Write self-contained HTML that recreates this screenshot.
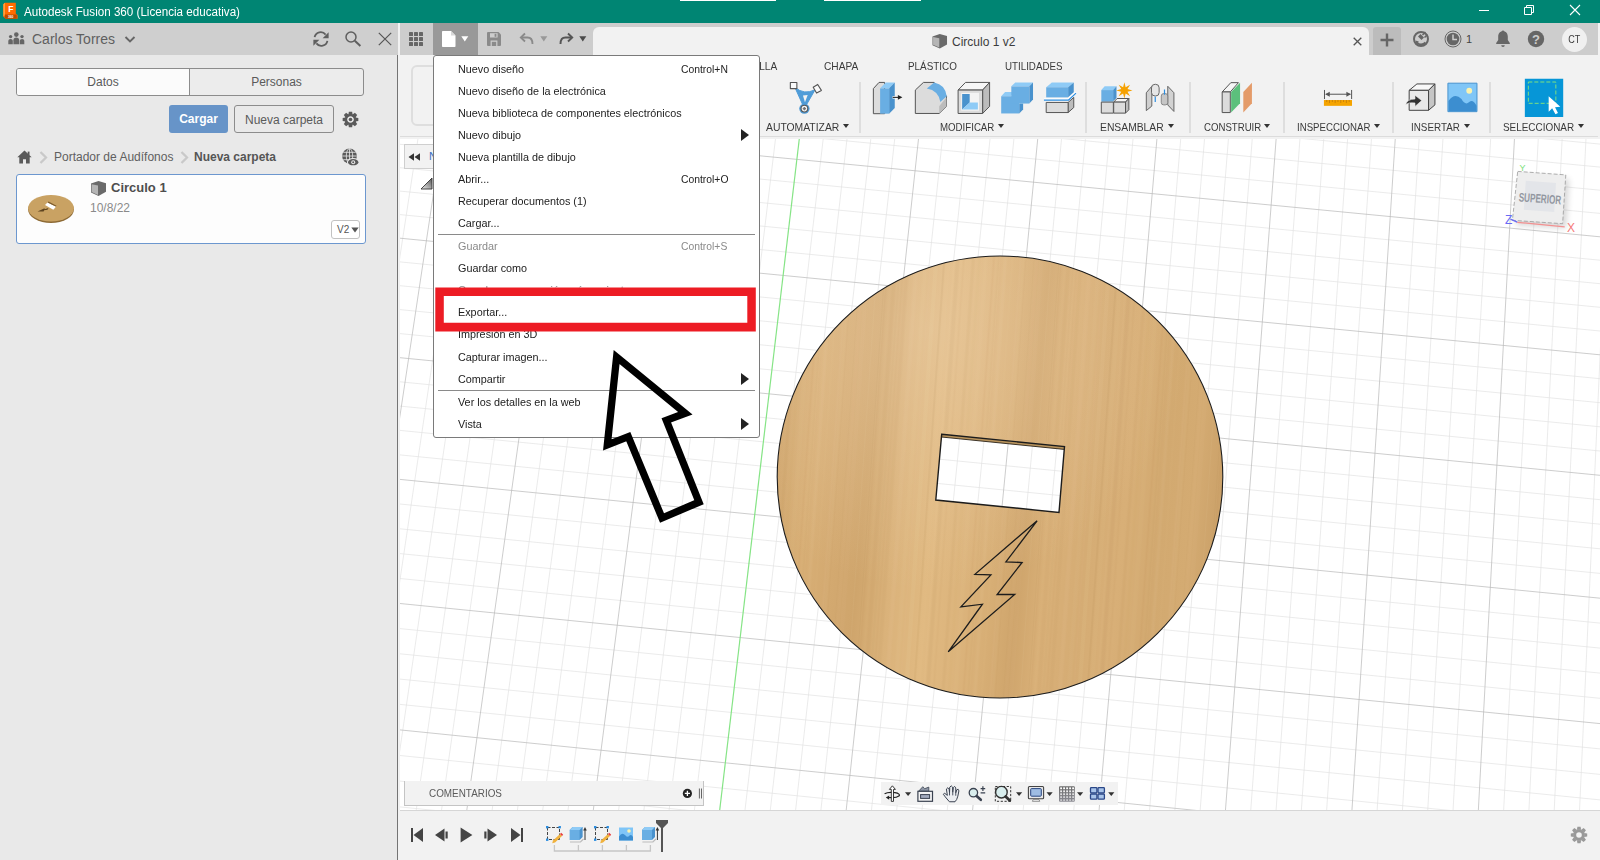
<!DOCTYPE html>
<html lang="es">
<head>
<meta charset="utf-8">
<title>Autodesk Fusion 360 (Licencia educativa)</title>
<style>
*{box-sizing:border-box;margin:0;padding:0}
html,body{width:1600px;height:860px;overflow:hidden;background:#f2f2f2;font-family:"Liberation Sans",Arial,sans-serif;font-size:12px;color:#3c3c3c}
.abs{position:absolute}
#titlebar{position:absolute;left:0;top:0;width:1600px;height:23px;background:#008573}
#titlebar .ttl{position:absolute;left:23.500px;top:4.500px;color:#fff;font-size:12.300px;line-height:15px;white-space:nowrap;transform-origin:0 50%;transform:scaleX(.946)}
#leftpanel{position:absolute;left:0;top:23px;width:398px;height:837px;background:#e9e9e9;border-right:1px solid #747474}
#lphead{position:absolute;left:0;top:0;width:398px;height:32px;background:#cfcfcf}
#lphead .name{position:absolute;left:32px;top:8px;font-size:14px;line-height:16px;color:#5f5f5f;white-space:nowrap}
.tabs{position:absolute;left:16px;top:45px;width:348px;height:28px;border:1px solid #8c8c8c;border-radius:3px;background:#ececec;overflow:hidden}
.tabs div{position:absolute;top:0;height:26px;line-height:26px;text-align:center;color:#5a5a5a;font-size:12px}
.tabs .t1{left:0;width:173px;background:#fbfbfb;border-right:1px solid #8c8c8c}
.tabs .t2{left:173px;width:173px}
.btn{position:absolute;height:28px;line-height:28px;text-align:center;border-radius:3px;font-size:12px;white-space:nowrap}

#tabstrip{position:absolute;left:400px;top:23px;width:1198px;height:32px;background:#cdcdcd}
#doctab{position:absolute;left:193px;top:4px;width:776px;height:28px;background:#f2f2f2;border-radius:6px 6px 0 0}
.tbtab{position:absolute;transform-origin:0 50%;top:59px;font-size:11px;line-height:14px;color:#3a3a3a;white-space:nowrap}
.glab{position:absolute;top:120px;font-size:11px;line-height:14px;color:#3a3a3a;white-space:nowrap}
.glab span{display:inline-block;transform-origin:0 50%}
.glab i{position:absolute;top:4px;width:0;height:0;border:3px solid transparent;border-top:4px solid #333;border-bottom:0}
.vsep{position:absolute;top:82px;width:2px;height:51px;background:#dedede}
#canvas{position:absolute;left:400px;top:139px;width:1200px;height:671px;background:#fff;overflow:hidden}

#menu{position:absolute;left:433px;top:55px;width:327px;height:383px;background:#fff;border:1px solid #7a7a7a;border-radius:3px}
#menu .mi{position:absolute;left:24px;font-size:11.5px;line-height:14px;color:#222;white-space:nowrap;transform-origin:0 50%;transform:scaleX(.94)}
#menu .sc{position:absolute;left:247px;font-size:11.5px;line-height:14px;color:#222;white-space:nowrap;transform-origin:0 50%;transform:scaleX(.9)}
#menu .dis{color:#8a8a8a}
#menu .sep{position:absolute;left:4px;width:317px;height:1px;background:#8a8a8a}
#menu .ar{position:absolute;left:307px;width:0;height:0;border:6.5px solid transparent;border-left:8.5px solid #222;border-right:0;margin-top:-1px}
</style>
</head>
<body>
<div id="titlebar">
  
  <svg class="abs" style="left:3px;top:2px" width="15" height="18" viewBox="0 0 15 18"><path d="M0.300 2.200L2 0.800H12.800V11.800L14.600 13V16.800H2.600L0.300 14.600z" fill="#ff6b00"/><path d="M0.300 2.200L2 0.800V13.500L0.300 14.600z" fill="#ffa040"/><path d="M1.800 12.500H13.800V16.800H2.600L1.800 16z" fill="#b84a00"/><text x="5.200" y="9.800" font-family="Liberation Sans, sans-serif" font-size="8.500" font-weight="bold" fill="#fff">F</text><text x="5" y="16" font-family="Liberation Sans, sans-serif" font-size="3.200" font-weight="bold" fill="#fff">360</text></svg>
  <div class="abs" style="left:680px;top:0;width:96px;height:1px;background:#fff"></div>
  <div class="abs" style="left:824px;top:0;width:97px;height:1px;background:#fff"></div>
  <svg class="abs" style="left:1470px;top:0" width="130" height="23" viewBox="1470 0 130 23"><path d="M1479 10.500h10" stroke="#fff" stroke-width="1"/><path d="M1524.500 7.500h7v7h-7zM1526.500 7.500v-2h7v7h-2" fill="none" stroke="#fff" stroke-width="1"/><path d="M1570 5l10 10M1580 5l-10 10" stroke="#fff" stroke-width="1.100"/></svg>
  <div class="ttl">Autodesk Fusion 360 (Licencia educativa)</div>
</div>
<div id="leftpanel">
  <div id="lphead"><div class="name">Carlos Torres</div>
  <svg class="abs" style="left:8px;top:9px" width="17" height="13" viewBox="0 0 17 13"><g fill="#666"><circle cx="8.3" cy="2.6" r="2.3"/><path d="M5.4 12.2V8.2c0-1.7 1.3-2.6 2.9-2.6s2.9.9 2.9 2.6v4z"/><circle cx="2.6" cy="4.6" r="1.7"/><path d="M0.3 12.2V9c0-1.4 1-2.1 2.3-2.1S4.8 7.6 4.8 9v3.2z"/><circle cx="14" cy="4.6" r="1.7"/><path d="M11.8 12.2V9c0-1.4 1-2.1 2.3-2.1s2.2.7 2.2 2.1v3.2z"/></g></svg>
  <svg class="abs" style="left:124px;top:12px" width="12" height="9" viewBox="0 0 12 9"><path d="M1.5 2l4.5 4.5L10.500 2" fill="none" stroke="#666" stroke-width="1.9"/></svg>
  <svg class="abs" style="left:312px;top:8px" width="18" height="16" viewBox="0 0 18 16"><g fill="none" stroke="#5f5f5f" stroke-width="1.8"><path d="M2.6 6.2A6.2 6.2 0 0 1 13.6 3.6"/><path d="M15.400 9.800A6.200 6.200 0 0 1 4.400 12.400"/></g><path d="M16.600 1.200v6h-6z" fill="#5f5f5f"/><path d="M1.400 14.800v-6h6z" fill="#5f5f5f"/></svg>
  <svg class="abs" style="left:343px;top:7px" width="20" height="18" viewBox="0 0 20 18"><circle cx="8" cy="7" r="5" fill="none" stroke="#5f5f5f" stroke-width="1.5"/><path d="M11.800 10.800L17.400 16" stroke="#5f5f5f" stroke-width="2"/></svg>
  <svg class="abs" style="left:378px;top:9px" width="14" height="14" viewBox="0 0 14 14"><path d="M0.800 0.800L13.200 13.200M13.200 0.800L0.800 13.200" stroke="#555" stroke-width="1.2"/></svg>
</div>
  <div class="tabs"><div class="t1">Datos</div><div class="t2">Personas</div></div>
  <div class="btn" style="left:169px;top:82px;width:59px;background:#6794c8;color:#fff;font-weight:bold">Cargar</div>
  <div class="btn" style="left:234px;top:82px;width:100px;border:1px solid #8c8c8c;color:#5a5a5a;line-height:27px;padding-top:1px">Nueva carpeta</div>
  <svg class="abs" style="left:341.500px;top:87.500px" width="17" height="17" viewBox="-8.900 -8.900 17.800 17.800"><g fill="#5a5a5a"><path id="gt" d="M-1.700 -8.200h3.400l.5 3h-4.400z"/><use href="#gt" transform="rotate(45)"/><use href="#gt" transform="rotate(90)"/><use href="#gt" transform="rotate(135)"/><use href="#gt" transform="rotate(180)"/><use href="#gt" transform="rotate(225)"/><use href="#gt" transform="rotate(270)"/><use href="#gt" transform="rotate(315)"/></g><circle r="4.800" fill="none" stroke="#5a5a5a" stroke-width="2.600"/><circle r="1.900" fill="#5a5a5a"/></svg>
  <svg class="abs" style="left:17px;top:127px" width="15" height="14" viewBox="0 0 15 14"><path d="M7.500 0.500L0.300 7.200h2.000V13.500h3.700V9.300h3V13.500h3.700V7.200h2.000z" fill="#5a5a5a"/><rect x="10.700" y="1.600" width="1.800" height="3.500" fill="#5a5a5a"/></svg>
  <svg class="abs" style="left:39px;top:128px" width="9" height="13" viewBox="0 0 9 13"><path d="M1.500 1L7 6.500L1.500 12" fill="none" stroke="#c9c9c9" stroke-width="2.300"/></svg>
  <div class="abs" style="left:54px;top:126px;line-height:16px;color:#606060;white-space:nowrap">Portador de Audífonos</div>
  <svg class="abs" style="left:180px;top:128px" width="9" height="13" viewBox="0 0 9 13"><path d="M1.500 1L7 6.500L1.500 12" fill="none" stroke="#c9c9c9" stroke-width="2.300"/></svg>
  <div class="abs" style="left:194px;top:126px;line-height:16px;color:#555;font-weight:bold;white-space:nowrap">Nueva carpeta</div>
  <svg class="abs" style="left:342px;top:125px" width="18" height="19" viewBox="0 0 18 19"><circle cx="7.500" cy="8" r="7.400" fill="#5a5a5a"/><g fill="none" stroke="#e9e9e9" stroke-width=".8"><ellipse cx="7.500" cy="8" rx="3.200" ry="7.400"/><path d="M7.500 0.600v14.800M0.100 8h14.800M1.200 4.300h12.600M1.200 11.700h12.600"/></g><ellipse cx="11.200" cy="14.200" rx="6.200" ry="4.200" fill="#e9e9e9"/><ellipse cx="11.200" cy="14.200" rx="5.200" ry="3.100" fill="#5a5a5a"/><circle cx="11.200" cy="14.200" r="2" fill="#e9e9e9"/><circle cx="11.200" cy="14.200" r="1" fill="#5a5a5a"/></svg>
  <div class="abs" style="left:16px;top:151px;width:350px;height:70px;background:#fdfdfd;border:1px solid #6c97cf;border-radius:3px">
    <svg class="abs" style="left:9px;top:17px" width="50" height="34" viewBox="0 0 50 34"><ellipse cx="25" cy="17.600" rx="22.900" ry="13.300" fill="#8d6a35"/><ellipse cx="25" cy="16.200" rx="22.900" ry="13.200" fill="#c9a263"/><ellipse cx="25" cy="16.200" rx="22.900" ry="13.200" fill="none" opacity=".5"/><path d="M21.500 10.500l8.500 4.300-2.700 2.900-8.300-4.600z" fill="#fff"/><path d="M22.500 9.600l8 4.100-.7.900-8.200-4.200z" fill="#7a5a2c"/><path d="M11.500 19.500l7-3.300 .2 1.100 3.800-1.300-1 1.800-3.300.5-.6 1.100z" fill="#5e4420"/></svg>
    <svg class="abs" style="left:73px;top:5px" width="17" height="17" viewBox="0 0 17 17"><path d="M1 3.500L8.500 1L16 3.200V11.800L8.500 16L1 12.500z" fill="#6a6a6a"/><path d="M1.600 4.200L8 5.500V15L1.600 12z" fill="#b5b5b5"/></svg>
    <div class="abs" style="left:94px;top:5px;font-size:13px;font-weight:bold;line-height:16px;color:#4e4e4e;white-space:nowrap">Circulo 1</div>
    <div class="abs" style="left:73px;top:25px;font-size:12px;line-height:16px;color:#8a8a8a;white-space:nowrap">10/8/22</div>
    <div class="abs" style="left:314px;top:45px;width:29px;height:18.500px;border:1px solid #c2c2c2;border-radius:3px;background:#fff"><span class="abs" style="left:5px;top:3px;font-size:10px;line-height:12px;color:#555">V2</span><svg class="abs" style="left:19px;top:6px" width="8" height="6" viewBox="0 0 8 6"><path d="M0.300 0.500h7.400L4 5.500z" fill="#555"/></svg></div>
  </div>
</div>

<div class="abs" style="left:399px;top:23px;width:1201px;height:837px;background:#f2f2f2"></div>
<div id="tabstrip">
  <svg class="abs" style="left:9px;top:9px" width="14" height="14" viewBox="0 0 14 14"><g fill="#666"><rect x="0" y="0" width="4" height="4" rx=".6"/><rect x="5" y="0" width="4" height="4" rx=".6"/><rect x="10" y="0" width="4" height="4" rx=".6"/><rect x="0" y="5" width="4" height="4" rx=".6"/><rect x="5" y="5" width="4" height="4" rx=".6"/><rect x="10" y="5" width="4" height="4" rx=".6"/><rect x="0" y="10" width="4" height="4" rx=".6"/><rect x="5" y="10" width="4" height="4" rx=".6"/><rect x="10" y="10" width="4" height="4" rx=".6"/></g></svg>
  <div class="abs" style="left:33px;top:0;width:45px;height:32px;background:#999"></div>
  <svg class="abs" style="left:42px;top:8px" width="14" height="16" viewBox="0 0 14 16"><path d="M0.800 0h8.200L13.500 4.500V15.200a.8.800 0 0 1-.8.800H0.800a.8.800 0 0 1-.8-.8V0.800A.8.800 0 0 1 .8 0z" fill="#fff"/><path d="M9 0v4.500h4.500z" fill="#d8d8d8"/></svg>
  <svg class="abs" style="left:61px;top:13px" width="8" height="6" viewBox="0 0 8 6"><path d="M0.300 0.300h7.000L3.800 5.500z" fill="#fff"/></svg>
  <svg class="abs" style="left:87px;top:9px" width="14" height="14" viewBox="0 0 14 14"><path d="M1 0h10.500L14 2.500V13a1 1 0 0 1-1 1H1a1 1 0 0 1-1-1V1a1 1 0 0 1 1-1z" fill="#8a8a8a"/><rect x="3" y="1.200" width="7.600" height="4.300" fill="#cdcdcd"/><rect x="7.600" y="1.800" width="1.800" height="3" fill="#8a8a8a"/><rect x="3.600" y="8.500" width="6.800" height="5.500" fill="#cdcdcd"/><rect x="4.800" y="9.800" width="4.400" height="4.200" fill="#8a8a8a"/></svg>
  <svg class="abs" style="left:119px;top:9px" width="16" height="14" viewBox="0 0 16 14"><path d="M6 1.500L1.800 5.500L6 9.500" fill="none" stroke="#8a8a8a" stroke-width="1.800"/><path d="M2 5.500h6.500c3.500 0 5 2.500 5 6.500" fill="none" stroke="#8a8a8a" stroke-width="1.800"/></svg>
  <svg class="abs" style="left:140px;top:13px" width="8" height="6" viewBox="0 0 8 6"><path d="M0.300 0.300h7.000L3.800 5.500z" fill="#999"/></svg>
  <svg class="abs" style="left:158px;top:9px" width="16" height="14" viewBox="0 0 16 14"><path d="M10 1.500L14.200 5.500L10 9.500" fill="none" stroke="#555" stroke-width="1.900"/><path d="M14 5.500H7.500c-3.500 0-5 2.500-5 6.500" fill="none" stroke="#555" stroke-width="1.900"/></svg>
  <svg class="abs" style="left:179px;top:13px" width="8" height="6" viewBox="0 0 8 6"><path d="M0.300 0.300h7.000L3.800 5.500z" fill="#4a4a4a"/></svg>
  <div id="doctab">
    <svg class="abs" style="left:337.500px;top:5.500px" width="17.500" height="16.500" viewBox="0 0 17 17"><path d="M1 3.500L8.500 1L16 3.200V11.800L8.500 16L1 12.500z" fill="#6a6a6a"/><path d="M1.600 4.200L8 5.500V15L1.600 12z" fill="#b5b5b5"/></svg>
    <div class="abs" style="left:359px;top:8px;font-size:12px;line-height:14px;color:#3c3c3c;white-space:nowrap">Circulo 1 v2</div>
    <svg class="abs" style="left:760px;top:10px" width="9" height="9" viewBox="0 0 9 9"><path d="M0.700 0.700L8.300 8.300M8.300 0.700L0.700 8.300" stroke="#555" stroke-width="1.300"/></svg>
  </div>
  <div class="abs" style="left:973px;top:4px;width:28px;height:28px;background:#bcbcbc;border-radius:3px 3px 0 0"></div>
  <svg class="abs" style="left:980px;top:10px" width="14" height="14" viewBox="0 0 14 14"><path d="M7 0.500v13M0.500 7h13" stroke="#666" stroke-width="2.400"/></svg>
  <svg class="abs" style="left:1012px;top:7px" width="18" height="18" viewBox="0 0 18 18"><circle cx="9" cy="9" r="7" fill="none" stroke="#666" stroke-width="2"/><path d="M6 6.500l3.500 3.500 2.500-2.500-3.500-3.500z" fill="#666"/><path d="M10.500 5L13.500 2M12.500 7.500L15.500 4.500" stroke="#666" stroke-width="1.500"/><path d="M5 12.500c2 2.500 6 2.500 8.500 0" fill="none" stroke="#666" stroke-width="2"/><path d="M3.500 10.500l3.300 1-2.300 2.800z" fill="#666"/></svg>
  <svg class="abs" style="left:1044px;top:7px" width="18" height="18" viewBox="0 0 18 18"><circle cx="9" cy="9" r="8" fill="none" stroke="#666" stroke-width="1"/><circle cx="9" cy="9" r="6.300" fill="#666"/><path d="M9 4.500V9.500H13" fill="none" stroke="#cdcdcd" stroke-width="1.500"/></svg>
  <div class="abs" style="left:1066px;top:9px;font-size:11px;line-height:14px;color:#444">1</div>
  <svg class="abs" style="left:1095px;top:7px" width="16" height="18" viewBox="0 0 16 18"><path d="M8 1.200c-3 0-4.800 2.200-4.800 5.300v3.500L1.200 13v1h13.600v-1L12.800 10V6.500C12.800 3.400 11 1.200 8 1.200z" fill="#666"/><circle cx="8" cy="1.600" r="1.200" fill="#666"/><path d="M6.200 15.200a1.800 1.800 0 0 0 3.600 0z" fill="#666"/></svg>
  <svg class="abs" style="left:1127px;top:7px" width="18" height="18" viewBox="0 0 18 18"><circle cx="9" cy="9" r="8.200" fill="#666"/><text x="9" y="13.500" font-family="Liberation Sans, sans-serif" font-size="13" font-weight="bold" fill="#cdcdcd" text-anchor="middle">?</text></svg>
  <div class="abs" style="left:1162px;top:4px;width:25px;height:25px;border-radius:50%;background:#f0f0f0;text-align:center;font-size:11px;line-height:25px;color:#3a3a3a"><span style="display:inline-block;transform:scaleX(.82)">CT</span></div>
</div>
<div class="abs" style="left:411px;top:65px;width:80px;height:61px;border:2px solid #dedede;border-radius:6px"></div>
<div class="tbtab" style="left:743.5px;transform:scaleX(0.92)">MALLA</div>
<div class="tbtab" style="left:824.4px;transform:scaleX(0.925)">CHAPA</div>
<div class="tbtab" style="left:907.5px;transform:scaleX(0.897)">PLÁSTICO</div>
<div class="tbtab" style="left:1005.3px;transform:scaleX(0.887)">UTILIDADES</div>
<div class="glab" style="left:766.4px"><span style="transform:scaleX(0.942)">AUTOMATIZAR</span><i style="left:76.9px"></i></div>
<div class="glab" style="left:940.3px"><span style="transform:scaleX(0.88)">MODIFICAR</span><i style="left:57.9px"></i></div>
<div class="glab" style="left:1100.3px"><span style="transform:scaleX(0.939)">ENSAMBLAR</span><i style="left:67.3px"></i></div>
<div class="glab" style="left:1203.5px"><span style="transform:scaleX(0.875)">CONSTRUIR</span><i style="left:60.8px"></i></div>
<div class="glab" style="left:1297.4px"><span style="transform:scaleX(0.876)">INSPECCIONAR</span><i style="left:77.0px"></i></div>
<div class="glab" style="left:1411.1px"><span style="transform:scaleX(0.895)">INSERTAR</span><i style="left:52.5px"></i></div>
<div class="glab" style="left:1503.1px"><span style="transform:scaleX(0.902)">SELECCIONAR</span><i style="left:74.7px"></i></div>
<!--ICONS--><svg class="abs" style="left:760px;top:76px" width="840" height="44" viewBox="760 76 840 44"><path d="M794.85 87.25 Q804.19 95.35 815.10 89.72 L806.32 105.02 L802.84 105.02 Z" fill="#4f9cd8" stroke="#4f9cd8" stroke-width="1" stroke-linejoin="round"/><polygon points="802.95,95.57 807.67,95.01 804.97,102.32" fill="#f2f2f2"/><circle cx="804.41" cy="108.62" r="5.17" fill="#4f9cd8"/><circle cx="804.41" cy="108.62" r="3.37" fill="#f4f4f4" stroke="#555" stroke-width="1.1"/><path d="M802.84 108.62h3.15M804.41 107.05v3.15" stroke="#666" stroke-width=".8"/><circle cx="804.41" cy="108.62" r="1.12" fill="none" stroke="#666" stroke-width="0.7"/><polygon points="790.35,82.52 796.87,82.52 796.87,88.60 790.35,88.60" fill="#fafafa" stroke="#555" stroke-width="1.1" stroke-linejoin="round"/><polygon points="813.19,87.25 817.69,84.44 821.40,90.40 816.56,93.10" fill="#fafafa" stroke="#555" stroke-width="1.1" stroke-linejoin="round"/><polygon points="873.37,88.60 879.00,82.41 884.62,82.41 884.62,113.69 873.37,113.69" fill="#dcdcdc" stroke="#555" stroke-width="1" stroke-linejoin="round"/><polygon points="880.12,88.37 885.75,82.41 894.75,82.41 889.12,88.37" fill="#8fcbf6"/><polygon points="889.12,88.37 894.75,82.41 894.75,108.06 889.12,113.69" fill="#4992cd"/><polygon points="880.12,88.37 889.12,88.37 889.12,113.69 880.12,113.69" fill="#69aee3"/><path d="M892.50 97.37H899.47" stroke="#fff" stroke-width="2.4"/><path d="M892.72 97.37H899.47" stroke="#222" stroke-width="1.1"/><polygon points="897.90,94.90 902.40,97.37 897.90,99.85" fill="#222"/><polygon points="915.34,90.06 923.44,82.41 934.12,82.41 946.50,96.25 946.50,106.37 939.19,113.46 915.34,113.46" fill="#dcdcdc" stroke="#555" stroke-width="1" stroke-linejoin="round"/><polygon points="939.19,106.37 946.50,97.37 946.50,106.37 939.19,113.46" fill="#bcbcbc"/><path d="M926.81 88.60 L934.12 82.41 Q945.37 84.44 946.72 96.25 L940.31 102.10 Q938.62 90.62 926.81 88.60Z" fill="#69aee3"/><polygon points="958.10,90.06 965.52,82.41 989.60,82.41 982.62,90.06" fill="#f6f6f6" stroke="#555" stroke-width="1" stroke-linejoin="round"/><polygon points="982.62,90.06 989.60,82.41 989.60,106.37 982.62,113.46" fill="#bcbcbc" stroke="#555" stroke-width="1" stroke-linejoin="round"/><polygon points="958.10,90.06 982.62,90.06 982.62,113.46 958.10,113.46" fill="#dcdcdc" stroke="#555" stroke-width="1" stroke-linejoin="round"/><polygon points="961.25,92.87 979.02,92.87 979.02,110.65 961.25,110.65" fill="#f4f4f4"/><polygon points="962.15,94.00 969.69,94.00 969.69,102.44 962.15,109.52" fill="#4992cd"/><polygon points="962.15,109.52 969.69,102.44 977.90,102.44 977.90,109.52" fill="#8fcbf6"/><polygon points="1001.19,96.25 1005.12,92.09 1013.00,92.09 1011.31,96.25" fill="#8fcbf6"/><polygon points="1019.19,103.56 1023.12,103.56 1023.12,109.52 1019.19,113.46" fill="#4992cd"/><polygon points="1001.19,96.25 1019.19,96.25 1019.19,113.46 1001.19,113.46" fill="#69aee3"/><polygon points="1011.31,86.35 1015.25,82.41 1033.02,82.41 1029.31,86.35" fill="#8fcbf6"/><polygon points="1029.31,86.35 1033.02,82.41 1033.02,99.62 1029.31,103.56" fill="#4992cd"/><polygon points="1011.31,86.35 1029.31,86.35 1029.31,103.56 1011.31,103.56" fill="#69aee3"/><polygon points="1046.19,87.25 1051.81,82.41 1073.75,82.41 1068.12,87.25" fill="#8fcbf6"/><polygon points="1068.12,87.25 1073.75,82.41 1073.75,92.31 1068.12,97.37" fill="#4992cd"/><polygon points="1046.19,87.25 1068.12,87.25 1068.12,97.37 1046.19,97.37" fill="#69aee3"/><polygon points="1068.12,102.44 1073.75,97.37 1073.75,107.50 1068.12,112.56" fill="#bcbcbc" stroke="#555" stroke-width="1" stroke-linejoin="round"/><polygon points="1046.19,102.44 1068.12,102.44 1068.12,112.56 1046.19,112.56" fill="#dcdcdc" stroke="#555" stroke-width="1" stroke-linejoin="round"/><polyline points="1043.94,99.40 1068.35,99.40 1076.00,92.42" fill="none" stroke="#fff" stroke-width="2.2" stroke-linejoin="round"/><polyline points="1043.94,100.19 1068.35,100.19 1076.00,93.10" fill="none" stroke="#2b8de0" stroke-width="1.2" stroke-linejoin="round"/><polygon points="1101.31,90.06 1104.69,86.35 1116.50,86.35 1113.12,90.06" fill="#8fcbf6"/><polygon points="1113.12,90.06 1116.50,86.35 1116.50,97.94 1113.12,101.31" fill="#4992cd"/><polygon points="1101.31,90.06 1113.12,90.06 1113.12,101.65 1101.31,101.65" fill="#69aee3"/><polygon points="1113.69,102.10 1117.06,98.50 1128.87,98.50 1125.50,102.10" fill="#f6f6f6" stroke="#555" stroke-width="1" stroke-linejoin="round"/><polygon points="1125.50,102.10 1128.87,98.50 1128.87,109.75 1125.50,113.12" fill="#bcbcbc" stroke="#555" stroke-width="1" stroke-linejoin="round"/><polygon points="1101.31,102.10 1113.35,102.10 1113.35,113.12 1101.31,113.12" fill="#dcdcdc" stroke="#555" stroke-width="1" stroke-linejoin="round"/><polygon points="1113.69,102.10 1125.50,102.10 1125.50,113.12 1113.69,113.12" fill="#dcdcdc" stroke="#555" stroke-width="1" stroke-linejoin="round"/><polygon points="1124.37,82.30 1125.66,87.28 1130.10,84.67 1127.49,89.11 1132.47,90.40 1127.49,91.69 1130.10,96.13 1125.66,93.52 1124.37,98.50 1123.08,93.52 1118.65,96.13 1121.25,91.69 1116.27,90.40 1121.25,89.11 1118.65,84.67 1123.08,87.28" fill="#f5a100"/><polygon points="1146.30,92.75 1151.82,86.25 1151.82,106.07 1146.30,110.62" fill="#cfcfcf" stroke="#666" stroke-width="1" stroke-linejoin="round"/><rect x="1151.50" y="84.30" width="7.64" height="11.70" rx="3.5" fill="#e6e6e6" stroke="#666" stroke-width="1"/><polygon points="1167.75,86.25 1173.92,92.75 1173.92,111.44 1167.75,104.94" fill="#d2d2d2" stroke="#666" stroke-width="1" stroke-linejoin="round"/><rect x="1161.25" y="93.56" width="6.50" height="11.37" rx="2.5" fill="#c6c6c6" stroke="#777" stroke-width=".8"/><polyline points="1155.24,96.81 1155.24,102.01" fill="none" stroke="#2b8de0" stroke-width="1.2" stroke-linejoin="round"/><polyline points="1164.50,89.50 1164.50,94.70" fill="none" stroke="#2b8de0" stroke-width="1.2" stroke-linejoin="round"/><polygon points="1222.18,91.94 1230.80,82.67 1238.43,82.67 1230.31,91.94" fill="#f6f6f6" stroke="#555" stroke-width="1" stroke-linejoin="round"/><polygon points="1222.18,91.94 1230.31,91.94 1230.31,112.57 1222.18,112.57" fill="#dcdcdc" stroke="#555" stroke-width="1" stroke-linejoin="round"/><polygon points="1231.12,91.94 1240.06,82.67 1240.06,103.31 1231.12,112.57" fill="#5cc07c"/><polygon points="1243.31,91.94 1251.92,82.67 1251.92,103.31 1243.31,112.57" fill="#e49b69"/><polyline points="1324.49,89.96 1324.49,99.06" fill="none" stroke="#555" stroke-width="1" stroke-linejoin="round"/><polyline points="1351.62,89.96 1351.62,99.06" fill="none" stroke="#555" stroke-width="1" stroke-linejoin="round"/><polyline points="1325.85,94.22 1350.45,94.22" fill="none" stroke="#555" stroke-width="1" stroke-linejoin="round"/><polygon points="1325.26,94.22 1329.72,91.70 1329.72,96.74" fill="#555"/><polygon points="1350.84,94.22 1346.38,91.70 1346.38,96.74" fill="#555"/><polygon points="1323.91,100.03 1352.00,100.03 1352.00,105.85 1323.91,105.85" fill="#f5a400"/><polyline points="1326.72,100.03 1326.72,101.97" fill="none" stroke="#b8730a" stroke-width="0.7" stroke-linejoin="round"/><polyline points="1329.53,100.03 1329.53,102.94" fill="none" stroke="#b8730a" stroke-width="0.7" stroke-linejoin="round"/><polyline points="1332.34,100.03 1332.34,101.97" fill="none" stroke="#b8730a" stroke-width="0.7" stroke-linejoin="round"/><polyline points="1335.15,100.03 1335.15,102.94" fill="none" stroke="#b8730a" stroke-width="0.7" stroke-linejoin="round"/><polyline points="1337.96,100.03 1337.96,101.97" fill="none" stroke="#b8730a" stroke-width="0.7" stroke-linejoin="round"/><polyline points="1340.77,100.03 1340.77,102.94" fill="none" stroke="#b8730a" stroke-width="0.7" stroke-linejoin="round"/><polyline points="1343.57,100.03 1343.57,101.97" fill="none" stroke="#b8730a" stroke-width="0.7" stroke-linejoin="round"/><polyline points="1346.38,100.03 1346.38,102.94" fill="none" stroke="#b8730a" stroke-width="0.7" stroke-linejoin="round"/><polyline points="1349.19,100.03 1349.19,101.97" fill="none" stroke="#b8730a" stroke-width="0.7" stroke-linejoin="round"/><polygon points="1409.16,90.34 1416.91,83.95 1434.93,83.95 1428.54,90.34" fill="#f8f8f8" stroke="#444" stroke-width="1" stroke-linejoin="round"/><polygon points="1428.54,90.34 1434.93,83.95 1434.93,104.88 1428.54,110.30" fill="#c6c6c6" stroke="#444" stroke-width="1" stroke-linejoin="round"/><polygon points="1409.16,90.34 1428.54,90.34 1428.54,110.30 1409.16,110.30" fill="#e9e9e9" stroke="#444" stroke-width="1" stroke-linejoin="round"/><path d="M1405.68 104.49 Q1407.23 99.06 1414.98 99.06 V95.19 L1421.76 100.61 L1414.98 106.43 V102.94 Q1409.16 101.97 1405.68 104.49Z" fill="#333" stroke="#f2f2f2" stroke-width=".6"/><polygon points="1447.92,83.18 1476.98,83.18 1476.98,111.66 1447.92,111.66" fill="#80c6f7" stroke="#4a93cf" stroke-width="1" stroke-linejoin="round"/><path d="M1448.50 111.27 V101.00 Q1454.70 92.28 1461.48 99.06 Q1465.35 105.85 1469.23 101.97 Q1473.10 99.06 1476.59 105.85 V111.27Z" fill="#3c8ed0"/><circle cx="1469.23" cy="90.73" r="2.91" fill="#fbf3b0"/><polygon points="1524.84,78.72 1563.20,78.72 1563.20,116.89 1524.84,116.89" fill="#0696d7"/><rect x="1528.33" y="82.01" width="27.51" height="21.31" fill="none" stroke="#7fe07f" stroke-width="1" stroke-dasharray="4 2"/><polygon points="1548.67,96.16 1548.67,111.66 1552.16,108.36 1555.45,114.18 1557.97,113.01 1555.06,107.20 1560.30,106.81" fill="#fff"/></svg><!--/ICONS-->
<div class="vsep" style="left:859px"></div>
<div class="vsep" style="left:1085px"></div>
<div class="vsep" style="left:1189px"></div>
<div class="vsep" style="left:1283px"></div>
<div class="vsep" style="left:1392px"></div>
<div class="vsep" style="left:1489px"></div>
<div class="abs" style="left:400px;top:136px;width:1198px;height:1px;background:#dcdcdc"></div>
<div id="canvas"><!--CANVAS--><svg class="abs" style="left:0;top:-1px" width="1200" height="673" viewBox="400 138 1200 673">
<defs><linearGradient id="wood" gradientUnits="userSpaceOnUse" x1="777" y1="477" x2="1223" y2="520">
<stop offset="0" stop-color="#d0a66d"/><stop offset=".07" stop-color="#d8af76"/><stop offset=".14" stop-color="#d3a970"/><stop offset=".2" stop-color="#cfa56c"/><stop offset=".27" stop-color="#dab27a"/><stop offset=".36" stop-color="#e0b981"/><stop offset=".43" stop-color="#dcb47c"/><stop offset=".5" stop-color="#d7ae75"/><stop offset=".56" stop-color="#cfa56c"/><stop offset=".62" stop-color="#d9b078"/><stop offset=".7" stop-color="#d5ac74"/><stop offset=".78" stop-color="#d8af77"/><stop offset=".86" stop-color="#d2a970"/><stop offset=".93" stop-color="#d4ab72"/><stop offset="1" stop-color="#caa068"/></linearGradient>
<radialGradient id="hl" gradientUnits="userSpaceOnUse" cx="930" cy="330" r="260"><stop offset="0" stop-color="#f0d6b4" stop-opacity=".42"/><stop offset="1" stop-color="#f0d6b4" stop-opacity="0"/></radialGradient>
<pattern id="grain" patternUnits="userSpaceOnUse" width="173" height="10" patternTransform="rotate(4)"><rect x="0.0" y="0" width="2" height="10" fill="#fff0d0" opacity="0.029"/><rect x="3.0" y="0" width="1" height="10" fill="#7a4e18" opacity="0.018"/><rect x="11.0" y="0" width="1" height="10" fill="#7a4e18" opacity="0.022"/><rect x="13.0" y="0" width="3" height="10" fill="#fff0d0" opacity="0.018"/><rect x="17.0" y="0" width="4" height="10" fill="#fff0d0" opacity="0.017"/><rect x="28.0" y="0" width="1" height="10" fill="#fff0d0" opacity="0.037"/><rect x="36.0" y="0" width="1" height="10" fill="#7a4e18" opacity="0.035"/><rect x="38.0" y="0" width="1.5" height="10" fill="#8a5a1c" opacity="0.035"/><rect x="41.5" y="0" width="2" height="10" fill="#fff0d0" opacity="0.020"/><rect x="44.5" y="0" width="4" height="10" fill="#8a5a1c" opacity="0.035"/><rect x="50.5" y="0" width="1" height="10" fill="#7a4e18" opacity="0.035"/><rect x="53.5" y="0" width="2" height="10" fill="#8a5a1c" opacity="0.034"/><rect x="56.5" y="0" width="4" height="10" fill="#8a5a1c" opacity="0.036"/><rect x="65.5" y="0" width="4" height="10" fill="#fff0d0" opacity="0.042"/><rect x="74.5" y="0" width="4" height="10" fill="#fff0d0" opacity="0.028"/><rect x="80.5" y="0" width="1.5" height="10" fill="#fff0d0" opacity="0.018"/><rect x="85.0" y="0" width="4" height="10" fill="#fff0d0" opacity="0.045"/><rect x="94.0" y="0" width="2" height="10" fill="#7a4e18" opacity="0.050"/><rect x="97.0" y="0" width="4" height="10" fill="#fff0d0" opacity="0.021"/><rect x="104.0" y="0" width="1.5" height="10" fill="#fff0d0" opacity="0.030"/><rect x="106.5" y="0" width="4" height="10" fill="#7a4e18" opacity="0.043"/><rect x="113.5" y="0" width="2" height="10" fill="#8a5a1c" opacity="0.036"/><rect x="122.5" y="0" width="3" height="10" fill="#8a5a1c" opacity="0.044"/><rect x="128.5" y="0" width="3" height="10" fill="#8a5a1c" opacity="0.017"/><rect x="134.5" y="0" width="4" height="10" fill="#fff0d0" opacity="0.025"/><rect x="143.5" y="0" width="2" height="10" fill="#8a5a1c" opacity="0.048"/><rect x="148.5" y="0" width="1.5" height="10" fill="#7a4e18" opacity="0.019"/><rect x="151.0" y="0" width="1.5" height="10" fill="#8a5a1c" opacity="0.019"/><rect x="154.5" y="0" width="3" height="10" fill="#fff0d0" opacity="0.047"/><rect x="162.5" y="0" width="1" height="10" fill="#fff0d0" opacity="0.030"/><rect x="170.5" y="0" width="2" height="10" fill="#fff0d0" opacity="0.043"/></pattern><clipPath id="hole"><polygon points="941.7,434.2 1064.5,446.6 1059,512.4 935.8,500"/></clipPath></defs>
<path d="M418.1 138.0L315.0 811.0M465.7 138.0L365.6 811.0M489.6 138.0L390.9 811.0M513.4 138.0L416.1 811.0M537.2 138.0L441.4 811.0M584.9 138.0L492.0 811.0M608.8 138.0L517.3 811.0M632.6 138.0L542.6 811.0M656.4 138.0L567.9 811.0M704.1 138.0L618.5 811.0M727.9 138.0L643.8 811.0M751.8 138.0L669.0 811.0M775.6 138.0L694.3 811.0M823.3 138.0L744.9 811.0M847.1 138.0L770.2 811.0M870.9 138.0L795.5 811.0M894.8 138.0L820.8 811.0M942.5 138.0L871.4 811.0M966.3 138.0L896.6 811.0M990.1 138.0L921.9 811.0M1014.0 138.0L947.2 811.0M1061.6 138.0L997.8 811.0M1085.5 138.0L1023.1 811.0M1109.3 138.0L1048.4 811.0M1133.1 138.0L1073.7 811.0M1180.8 138.0L1124.2 811.0M1204.6 138.0L1149.5 811.0M1228.5 138.0L1174.8 811.0M1252.3 138.0L1200.1 811.0M1300.0 138.0L1250.7 811.0M1323.8 138.0L1276.0 811.0M1347.7 138.0L1301.3 811.0M1371.5 138.0L1326.6 811.0M1419.2 138.0L1377.1 811.0M1443.0 138.0L1402.4 811.0M1466.8 138.0L1427.7 811.0M1490.7 138.0L1453.0 811.0M1538.3 138.0L1503.6 811.0M1562.2 138.0L1528.9 811.0M1586.0 138.0L1554.2 811.0M1609.9 138.0L1579.5 811.0M400.0 29.0L1600.0 144.1M400.0 51.9L1600.0 167.1M400.0 74.9L1600.0 190.2M400.0 97.9L1600.0 213.4M400.0 144.3L1600.0 260.2M400.0 167.7L1600.0 283.7M400.0 191.1L1600.0 307.3M400.0 214.6L1600.0 331.0M400.0 261.9L1600.0 378.7M400.0 285.7L1600.0 402.7M400.0 309.6L1600.0 426.8M400.0 333.6L1600.0 451.0M400.0 381.8L1600.0 499.7M400.0 406.1L1600.0 524.2M400.0 430.4L1600.0 548.8M400.0 454.9L1600.0 573.4M400.0 504.0L1600.0 623.1M400.0 528.8L1600.0 648.1M400.0 553.6L1600.0 673.1M400.0 578.5L1600.0 698.3M400.0 628.6L1600.0 748.9M400.0 653.8L1600.0 774.4M400.0 679.1L1600.0 799.9M400.0 704.4L1600.0 825.6M400.0 755.5L1600.0 877.2M400.0 781.1L1600.0 903.1M400.0 806.9L1600.0 929.2" stroke="#e2e2e2" stroke-width=".7" fill="none"/>
<path d="M441.9 138.0L340.3 811.0M561.1 138.0L466.7 811.0M680.3 138.0L593.2 811.0M918.6 138.0L846.1 811.0M1037.8 138.0L972.5 811.0M1157.0 138.0L1099.0 811.0M1276.2 138.0L1225.4 811.0M1395.3 138.0L1351.9 811.0M1514.5 138.0L1478.3 811.0M1633.7 138.0L1604.7 811.0M400.0 121.1L1600.0 236.8M400.0 238.2L1600.0 354.8M400.0 357.7L1600.0 475.3M400.0 479.4L1600.0 598.2M400.0 603.5L1600.0 723.6M400.0 729.9L1600.0 851.3" stroke="#bcbcbc" stroke-width=".75" fill="none"/>
<path d="M799.4 138L719.6 811" stroke="#86e486" stroke-width="1.2" fill="none"/>
<path d="M777.2 477A222.8 221 0 1 0 1222.800 477A222.8 221 0 1 0 777.2 477ZM941.7 434.2L1064.5 446.6L1059 512.4L935.8 500Z" fill="url(#wood)" fill-rule="evenodd"/>
<path d="M777.2 477A222.8 221 0 1 0 1222.800 477A222.8 221 0 1 0 777.2 477ZM941.7 434.2L1064.5 446.6L1059 512.4L935.8 500Z" fill="url(#hl)" fill-rule="evenodd"/>
<path d="M777.2 477A222.8 221 0 1 0 1222.800 477A222.8 221 0 1 0 777.2 477ZM941.7 434.2L1064.5 446.6L1059 512.4L935.8 500Z" fill="url(#grain)" fill-rule="evenodd"/>
<path d="M777.2 477A222.8 221 0 1 0 1222.800 477A222.8 221 0 1 0 777.2 477Z" fill="none" stroke="#1c1c1c" stroke-width="1.1"/>
<polygon points="941.7,434.2 1064.5,446.6 1064.2,449.4 941.4,437" fill="#b8935c"/>
<path d="M941.7 434.2L1064.5 446.6L1059 512.4L935.8 500Z" fill="none" stroke="#1c1c1c" stroke-width="1.4"/>
<path d="M941.4 437L1064.2 449.4" stroke="#2a2218" stroke-width=".9" fill="none"/>
<polygon points="1037.1,520.8 1005.9,561.9 1022.1,562.5 997.1,594.5 1014.7,594.5 948.2,651.8 982.4,604.2 960.9,606.8 990.9,574.9 974.9,574.3" fill="none" stroke="#1c1c1c" stroke-width="1.3" stroke-linejoin="miter"/>
</svg><!--/CANVAS--></div>


<!--CANVASUI-->
<div class="abs" style="left:404px;top:144px;width:120px;height:25px;background:#f2f2f2;border:1px solid #cfcfcf"></div>
<svg class="abs" style="left:408px;top:152px" width="13" height="10" viewBox="0 0 13 10"><path d="M6 1.200v7.600L0.500 5zM12 1.200v7.600L6.500 5z" fill="#333"/></svg>
<div class="abs" style="left:429px;top:149px;font-size:11px;line-height:14px;color:#3a6fc0;white-space:nowrap">NAVEGADOR</div>
<svg class="abs" style="left:420px;top:177px" width="13" height="13" viewBox="0 0 13 13"><defs><linearGradient id="tg" x1="0" y1="1" x2="1" y2="0"><stop offset="0" stop-color="#eee"/><stop offset="1" stop-color="#555"/></linearGradient></defs><path d="M12 1V12H1z" fill="url(#tg)" stroke="#333" stroke-width=".9"/></svg>
<div class="abs" style="left:404px;top:781px;width:300px;height:25px;background:#f2f2f2;border:1px solid #c4c4c4;border-top:0"></div>
<div class="abs" style="left:429.400px;top:786px;font-size:11px;line-height:14px;color:#5a5a5a;white-space:nowrap;transform-origin:0 50%;transform:scaleX(.9)" id="coment">COMENTARIOS</div>
<svg class="abs" style="left:682px;top:788px" width="22" height="12" viewBox="0 0 22 12"><circle cx="5.400" cy="5.400" r="4.600" fill="#222"/><path d="M2.800 5.400h5.200M5.400 2.800v5.200" stroke="#fff" stroke-width="1.300"/><path d="M17.400 0.500v10M19.500 0.500v10" stroke="#555" stroke-width=".9"/></svg>
<!--/CANVASUI-->


<!--CUBE-->
<svg class="abs" style="left:1495px;top:155px" width="95" height="85" viewBox="1495 155 95 85">
<defs><filter id="cs" x="-30%" y="-30%" width="170%" height="170%"><feGaussianBlur stdDeviation="3"/></filter></defs>
<polygon points="1521,176 1569,179 1566,228 1516,225" fill="#000" opacity=".16" filter="url(#cs)"/>
<polygon points="1517.700,171.400 1565.800,174.900 1562.600,223.700 1512.400,220.300" fill="#eeeeee" stroke="#8f8f8f" stroke-width=".7" stroke-dasharray="4 2"/>
<polygon points="1525.800,180.800 1556,183 1554.200,212 1523.800,209.800" fill="#e3e5e9"/>
<path d="M1517.200 222.300L1564.700 226.800" stroke="#f39090" stroke-width="1.200"/>
<path d="M1510.500 219.200L1517.200 222.200" stroke="#6a6af5" stroke-width="1.400"/>
<text transform="translate(1518.400,201.400) rotate(4) scale(.655,1)" font-family="Liberation Sans, sans-serif" font-size="12.500" font-weight="bold" fill="#9297a0">SUPERIOR</text>
<text x="1519.500" y="171" font-family="Liberation Sans, sans-serif" font-size="9" fill="#7be07b">Y</text>
<text x="1505" y="223.500" font-family="Liberation Sans, sans-serif" font-size="12" fill="#6a6af5">Z</text>
<text x="1567" y="231.500" font-family="Liberation Sans, sans-serif" font-size="12" fill="#f57a7a">X</text>
</svg>
<!--/CUBE-->
<!--NAVBAR-->
<div class="abs" style="left:881px;top:782px;width:237px;height:23px;background:#f2f2f2"></div>
<svg class="abs" style="left:881px;top:782px" width="237" height="23" viewBox="881 782 237 23">
<path d="M884.600 793.800A7.900 2.600 0 1 1 889 797.500" fill="none" stroke="#222" stroke-width="1.200"/>
<path d="M885.800 797.600l3.400-2.100v4.200z" fill="#222"/>
<path d="M891.300 801.400v-12h-1.900l3-3.600 3 3.600h-1.900v12z" fill="#fff" stroke="#222" stroke-width=".9"/>
<path d="M905 792.300h6.200l-3.100 3.600z" fill="#333"/>
<path d="M918.500 791.300l4.300-4.600 1.900 2 4.100-1.600v4.200z" fill="#8d95a5" stroke="#3a4250" stroke-width=".8"/>
<rect x="917.900" y="791.300" width="14.600" height="10" fill="#f4f4f4" stroke="#3a4250" stroke-width="1.200"/>
<rect x="920.600" y="794.600" width="9" height="3.800" fill="#a2aabd" stroke="#3a4250" stroke-width="1"/>
<path d="M949.38 801.75 L945.25 796.88 L943.38 794.25 L944.50 793.13 L947.35 795.38 L946.38 789.00 L947.88 787.73 L949.15 789.00 L949.53 792.75 L949.75 787.13 L951.25 785.85 L952.60 787.13 L952.75 792.38 L953.35 787.50 L954.63 786.45 L955.75 787.88 L955.75 792.90 L956.80 789.75 L958.15 789.23 L958.90 790.88 L957.85 796.13 L956.65 799.50 L955.00 801.75Z" fill="#eceef2" stroke="#3a4250" stroke-width="1" stroke-linejoin="round"/><path d="M949.53 792.75V795.38M952.75 792.38V795.38M955.75 792.90V795.75" stroke="#3a4250" stroke-width=".9" fill="none"/>

<circle cx="973.400" cy="792.700" r="4.200" fill="#d9eeee" stroke="#3a4250" stroke-width="1.300"/>
<path d="M976.600 796l4.200 3.800" stroke="#3a4250" stroke-width="2.600" stroke-linecap="round"/>
<path d="M980.600 788.600h4.600M982.900 786.300v4.600M980.600 792.900h4.600" stroke="#3a4250" stroke-width="1.200"/>
<rect x="995.300" y="786.500" width="15.400" height="14.800" fill="none" stroke="#333" stroke-width="1" stroke-dasharray="2.200 1.600"/>
<circle cx="1001.400" cy="792.200" r="5.800" fill="#d9eeee" stroke="#333" stroke-width="1.400"/>
<path d="M1005.600 796.600l4.200 4" stroke="#333" stroke-width="2.800" stroke-linecap="round"/>
<path d="M1016 792.300h6.200l-3.100 3.600z" fill="#333"/>
<rect x="1028.400" y="786.500" width="15.200" height="12.200" rx="1" fill="#e9e9e9" stroke="#444" stroke-width="1.100"/>
<rect x="1030.700" y="788.600" width="10.600" height="7.600" rx=".8" fill="#9fbde3" stroke="#2a4780" stroke-width="1"/>
<path d="M1033.200 799.600h5.800l.8 1.700h-7.400z" fill="#fff" stroke="#666" stroke-width=".7"/>
<path d="M1046.5 792.300h6.200l-3.100 3.600z" fill="#333"/>
<defs><linearGradient id="gg" x1="0" y1="0" x2="0" y2="1"><stop offset="0" stop-color="#6b6b6b"/><stop offset="1" stop-color="#8c8c94"/></linearGradient></defs>
<rect x="1059" y="786.300" width="15.800" height="15.500" rx="1" fill="url(#gg)"/>
<g fill="#fff"><rect x="1060.2" y="787.4" width="1.800" height="1.800" opacity="1.00"/><rect x="1063.2" y="787.4" width="1.800" height="1.800" opacity="1.00"/><rect x="1066.2" y="787.4" width="1.800" height="1.800" opacity="1.00"/><rect x="1069.2" y="787.4" width="1.800" height="1.800" opacity="1.00"/><rect x="1072.2" y="787.4" width="1.800" height="1.800" opacity="1.00"/><rect x="1060.2" y="790.4" width="1.800" height="1.800" opacity="0.88"/><rect x="1063.2" y="790.4" width="1.800" height="1.800" opacity="0.88"/><rect x="1066.2" y="790.4" width="1.800" height="1.800" opacity="0.88"/><rect x="1069.2" y="790.4" width="1.800" height="1.800" opacity="0.88"/><rect x="1072.2" y="790.4" width="1.800" height="1.800" opacity="0.88"/><rect x="1060.2" y="793.3" width="1.800" height="1.800" opacity="0.76"/><rect x="1063.2" y="793.3" width="1.800" height="1.800" opacity="0.76"/><rect x="1066.2" y="793.3" width="1.800" height="1.800" opacity="0.76"/><rect x="1069.2" y="793.3" width="1.800" height="1.800" opacity="0.76"/><rect x="1072.2" y="793.3" width="1.800" height="1.800" opacity="0.76"/><rect x="1060.2" y="796.2" width="1.800" height="1.800" opacity="0.64"/><rect x="1063.2" y="796.2" width="1.800" height="1.800" opacity="0.64"/><rect x="1066.2" y="796.2" width="1.800" height="1.800" opacity="0.64"/><rect x="1069.2" y="796.2" width="1.800" height="1.800" opacity="0.64"/><rect x="1072.2" y="796.2" width="1.800" height="1.800" opacity="0.64"/><rect x="1060.2" y="799.2" width="1.800" height="1.800" opacity="0.52"/><rect x="1063.2" y="799.2" width="1.800" height="1.800" opacity="0.52"/><rect x="1066.2" y="799.2" width="1.800" height="1.800" opacity="0.52"/><rect x="1069.2" y="799.2" width="1.800" height="1.800" opacity="0.52"/><rect x="1072.2" y="799.2" width="1.800" height="1.800" opacity="0.52"/></g>
<path d="M1077 792.300h6.200l-3.100 3.600z" fill="#333"/>
<g fill="#a9c4ea" stroke="#2a4788" stroke-width="1.300"><rect x="1090.500" y="787.700" width="6.400" height="5.200" rx=".8"/><rect x="1098" y="787.700" width="6.400" height="5.200" rx=".8"/><rect x="1090.500" y="794" width="6.400" height="5.200" rx=".8"/><rect x="1098" y="794" width="6.400" height="5.200" rx=".8"/></g>
<path d="M1108.2 792.300h6.200l-3.100 3.600z" fill="#333"/>
</svg>
<!--/NAVBAR-->
<div class="abs" style="left:400px;top:810px;width:1200px;height:1px;background:#d6d6d6"></div>
<!--TIMELINE-->
<svg class="abs" style="left:400px;top:812px" width="300" height="48" viewBox="400 812 300 48">
<g fill="#444"><rect x="411" y="828" width="2" height="14"/><path d="M423 828v14l-9.500-7z"/>
<path d="M444.500 828.500v13l-9.500-6.500z"/><rect x="445.500" y="831.500" width="2.200" height="7"/>
<path d="M460.600 827.400v15.200l11.800-7.600z"/>
<path d="M487.500 828.500v13l9.500-6.500z"/><rect x="484.300" y="831.500" width="2.200" height="7"/>
<path d="M511 828v14l9.500-7z"/><rect x="521" y="828" width="2" height="14"/></g>
<path d="M554.400 845v6h96v-6M578.400 845v6M602.400 845v6M626.400 845v6" fill="none" stroke="#c6c6c6" stroke-width="1.300"/>
<g id="tsk"><rect x="547.500" y="827.500" width="12" height="12" fill="none" stroke="#444" stroke-width="1" stroke-dasharray="3 1.500"/><g fill="#2b8de0"><rect x="546" y="826" width="2.400" height="2.400"/><rect x="558.500" y="826" width="2.400" height="2.400"/><rect x="546" y="838.500" width="2.400" height="2.400"/></g><path d="M553 840.500l7-6.500 2 2-7 6.500-2.800.8z" fill="#f0b13c"/><path d="M560 834l1.200-1.200 2 2L562 836z" fill="#e83d3d"/></g>
<use href="#tsk" x="48" y="0"/>
<g id="tex"><path d="M569.600 830l3-3h10v10l-3 3z" fill="#4a92cd"/><path d="M569.600 830l3-3h10l-3 3z" fill="#8fcbf6"/><rect x="569.600" y="830" width="10" height="10" fill="#69aee3"/><path d="M570 842h10.500l3-3" fill="none" stroke="#bbb" stroke-width="1.200"/><path d="M585 840v-11" stroke="#333" stroke-width="1"/><path d="M583.200 830.500l1.800-3.500 1.800 3.500z" fill="#333"/></g>
<use href="#tex" x="72.400" y="0"/>
<rect x="619" y="827.500" width="14" height="13" fill="#7fc5f7"/><path d="M619 840.500v-4q3-5 6.500-1q2 2.500 4 0q2-1.500 3.500 1.500v3.500z" fill="#3c8ed0"/><circle cx="629" cy="831" r="1.800" fill="#fbf3b0"/>
<path d="M656 820h12v3l-5 5v24h-2v-24l-5-5z" fill="#555"/>
</svg>
<svg class="abs" style="left:1570px;top:826px" width="18" height="18" viewBox="-9 -9 18 18"><g fill="#999"><path id="g2" d="M-1.600 -8.200h3.200l.5 3h-4.200z"/><use href="#g2" transform="rotate(45)"/><use href="#g2" transform="rotate(90)"/><use href="#g2" transform="rotate(135)"/><use href="#g2" transform="rotate(180)"/><use href="#g2" transform="rotate(225)"/><use href="#g2" transform="rotate(270)"/><use href="#g2" transform="rotate(315)"/></g><circle r="4.300" fill="none" stroke="#999" stroke-width="3"/></svg>
<!--/TIMELINE-->
<!--MENU-->
<div id="menu">
<div class="mi" style="top:6px">Nuevo diseño</div><div class="sc" style="top:6px">Control+N</div>
<div class="mi" style="top:28px">Nuevo diseño de la electrónica</div>
<div class="mi" style="top:50px">Nueva biblioteca de componentes electrónicos</div>
<div class="mi" style="top:72px">Nuevo dibujo</div><div class="ar" style="top:73.5px"></div>
<div class="mi" style="top:94px">Nueva plantilla de dibujo</div>
<div class="mi" style="top:116px">Abrir...</div><div class="sc" style="top:116px">Control+O</div>
<div class="mi" style="top:138px">Recuperar documentos (1)</div>
<div class="mi" style="top:160px">Cargar...</div>
<div class="mi dis" style="top:183px">Guardar</div><div class="sc dis" style="top:183px">Control+S</div>
<div class="mi" style="top:205px">Guardar como</div>
<div class="mi dis" style="top:227px">Guardar como versión más reciente</div>
<div class="mi" style="top:271px">Impresión en 3D</div>
<div class="mi" style="top:294px">Capturar imagen...</div>
<div class="mi" style="top:316px">Compartir</div><div class="ar" style="top:317.5px"></div>
<div class="mi" style="top:339px">Ver los detalles en la web</div>
<div class="mi" style="top:361px">Vista</div><div class="ar" style="top:362.5px"></div>
<div class="sep" style="top:178px"></div>
<div class="sep" style="top:245px"></div>
<div class="sep" style="top:334px"></div>
</div>
<svg class="abs" style="left:430px;top:282px" width="332" height="56" viewBox="430 282 332 56"><path d="M435.300 287.400H755.800V331.600H435.300Z" fill="#ed1c24"/><path d="M443.800 295.900H747.300V322.700H443.800Z" fill="#fff"/></svg>
<div class="abs" style="left:458px;top:305px;font-size:11.5px;line-height:14px;color:#222;white-space:nowrap;transform-origin:0 50%;transform:scaleX(.94)">Exportar...</div>
<svg class="abs" style="left:590px;top:340px" width="130" height="190" viewBox="590 340 130 190"><polygon points="616.600,357 685.300,413.200 666.300,420.300 699,502.200 662,518 628.300,436.600 607.300,444.800" fill="none" stroke="#000" stroke-width="7.300" stroke-linejoin="miter"/></svg>
<!--/MENU-->
</body>
</html>
